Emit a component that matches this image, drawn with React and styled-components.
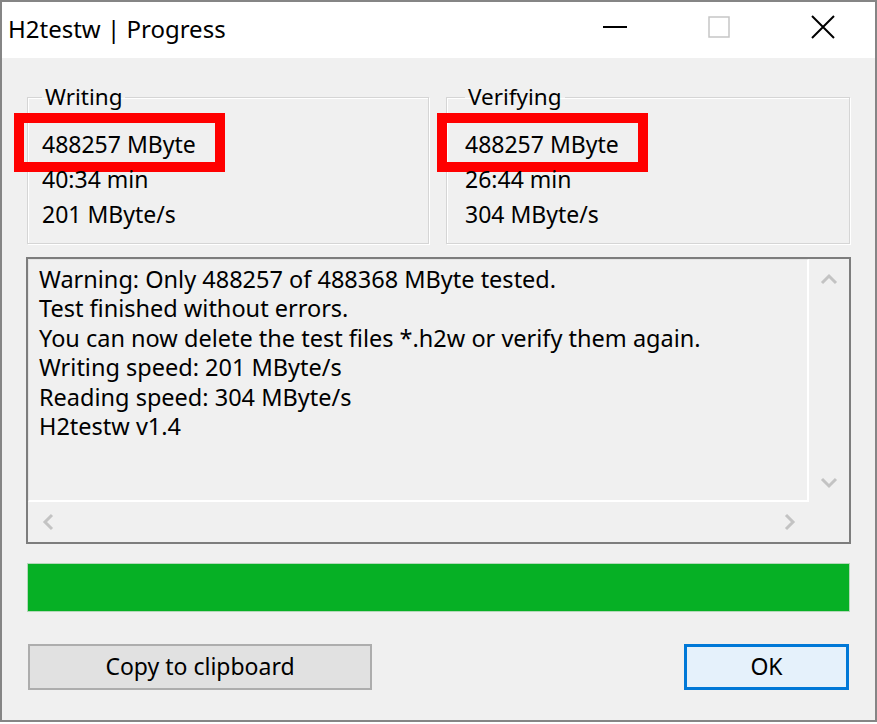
import styled, { createGlobalStyle } from "styled-components";

const GlobalStyle = createGlobalStyle`
    html, body {
        margin: 0;
        padding: 0;
        background: #ffffff;
    }
    body {
        font-family: "Noto Sans", "Open Sans", sans-serif;
        color: #000000;
    }
`;

const groups = [
    { title: "Writing", size: "488257 MByte", time: "40:34 min", speed: "201 MByte/s", inset: 14 },
    { title: "Verifying", size: "488257 MByte", time: "26:44 min", speed: "304 MByte/s", inset: 18 },
];

const log = [
    "Warning: Only 488257 of 488368 MByte tested.",
    "Test finished without errors.",
    "You can now delete the test files *.h2w or verify them again.",
    "Writing speed: 201 MByte/s",
    "Reading speed: 304 MByte/s",
    "H2testw v1.4",
];

function Chevron({ dir }) {
    const paths = {
        up: "M2 10 L9 3 L16 10",
        down: "M2 3 L9 10 L16 3",
        left: "M10 2 L3 9 L10 16",
        right: "M3 2 L10 9 L3 16",
    };
    const vertical = dir === "up" || dir === "down";
    return (
        <svg width={vertical ? 18 : 13} height={vertical ? 13 : 18} viewBox={vertical ? "0 0 18 13" : "0 0 13 18"}>
            <path d={paths[dir]} fill="none" stroke="#c3c3c3" strokeWidth="3" />
        </svg>
    );
}

export default function App() {
    return (
        <>
            <GlobalStyle />
            <Window>
                <TitleBar>
                    <Title>H2testw | Progress</Title>
                    <CaptionButton>
                        <svg width="24" height="4" viewBox="0 0 24 4">
                            <rect x="0" y="1" width="24" height="2" fill="#000" />
                        </svg>
                    </CaptionButton>
                    <CaptionButton>
                        <svg width="22" height="22" viewBox="0 0 22 22">
                            <rect x="1" y="1" width="20" height="20" fill="none" stroke="#c6c6c6" strokeWidth="1.5" />
                        </svg>
                    </CaptionButton>
                    <CaptionButton>
                        <svg width="24" height="24" viewBox="0 0 24 24">
                            <path d="M1 1 L23 23 M23 1 L1 23" stroke="#000" strokeWidth="2" />
                        </svg>
                    </CaptionButton>
                </TitleBar>
                <Client>
                    <GroupRow>
                        {groups.map((g) => (
                            <Group key={g.title} inset={g.inset}>
                                <Legend>{g.title}</Legend>
                                <Value highlight>{g.size}</Value>
                                <Value>{g.time}</Value>
                                <Value>{g.speed}</Value>
                            </Group>
                        ))}
                    </GroupRow>
                    <Memo>
                        <MemoText>
                            {log.map((line) => (
                                <div key={line}>{line}</div>
                            ))}
                        </MemoText>
                        <VScroll>
                            <ScrollArrow><Chevron dir="up" /></ScrollArrow>
                            <ScrollArrow><Chevron dir="down" /></ScrollArrow>
                        </VScroll>
                        <HScroll>
                            <ScrollArrow><Chevron dir="left" /></ScrollArrow>
                            <ScrollArrow><Chevron dir="right" /></ScrollArrow>
                        </HScroll>
                        <Corner />
                    </Memo>
                    <Progress />
                    <ButtonRow>
                        <Button width={344}>Copy to clipboard</Button>
                        <Button width={165} primary>OK</Button>
                    </ButtonRow>
                </Client>
            </Window>
        </>
    );
}

const Window = styled.div`
    width: 877px;
    height: 722px;
    box-sizing: border-box;
    border: 2px solid #858585;
    display: flex;
    flex-direction: column;
    background: #f0f0f0;
`;
const TitleBar = styled.div`
    height: 56px;
    flex-shrink: 0;
    background: #ffffff;
    display: flex;
    align-items: center;
    padding-left: 6px;
`;
const Title = styled.div`
    flex: 1;
    font-size: 24px;
    padding-bottom: 3px;
`;
const CaptionButton = styled.div`
    width: 104px;
    height: 100%;
    display: flex;
    align-items: center;
    justify-content: center;
    padding-bottom: 6px;
    box-sizing: border-box;
`;
const Client = styled.div`
    flex: 1;
    display: flex;
    flex-direction: column;
    padding: 26px 25px 30px 25px;
`;
const GroupRow = styled.div`
    display: grid;
    grid-template-columns: 402px 404px;
    column-gap: 17px;
`;
const Group = styled.fieldset`
    margin: 0;
    height: 160px;
    box-sizing: border-box;
    border: 1px solid #d5d5d5;
    box-shadow: inset 1px 1px 0 #ffffff, 1px 1px 0 #ffffff;
    padding: 17px 14px 0 ${({ inset }) => inset}px;
    min-width: 0;
`;
const Legend = styled.legend`
    margin-left: 0;
    padding: 0 3px;
    font-size: 22.5px;
    line-height: 26px;
`;
const Value = styled.div`
    position: relative;
    font-size: 23px;
    line-height: 35px;
    white-space: nowrap;
    ${({ highlight }) => highlight && `
        &::before {
            content: "";
            position: absolute;
            left: -28px;
            top: -14px;
            width: 211px;
            height: 59px;
            box-sizing: border-box;
            border: 10px solid #ff0000;
        }
    `}
`;
const Memo = styled.div`
    margin: 13px -1px 0 -1px;
    height: 287px;
    box-sizing: border-box;
    border: 2px solid #7d7d7d;
    display: grid;
    grid-template-columns: 1fr 40px;
    grid-template-rows: 1fr 40px;
`;
const MemoText = styled.div`
    padding: 5px 10px;
    font-size: 23.5px;
    line-height: 29.4px;
    white-space: nowrap;
    overflow: hidden;
    border-right: 2px solid #ffffff;
    border-bottom: 2px solid #ffffff;
    border-top: 1px solid #e4e4e4;
    border-left: 1px solid #e4e4e4;
`;
const VScroll = styled.div`
    display: flex;
    flex-direction: column;
    justify-content: space-between;
`;
const HScroll = styled.div`
    display: flex;
    justify-content: space-between;
`;
const ScrollArrow = styled.div`
    width: 40px;
    height: 40px;
    display: flex;
    align-items: center;
    justify-content: center;
`;
const Corner = styled.div`
    background: #f0f0f0;
`;
const Progress = styled.div`
    margin-top: 19px;
    height: 49px;
    box-sizing: border-box;
    background: #06b025;
    border: 1px solid #b4d8b9;
`;
const ButtonRow = styled.div`
    margin-top: 32px;
    display: flex;
    justify-content: space-between;
    padding: 0 1px;
`;
const Button = styled.button`
    width: ${({ width }) => width}px;
    height: 46px;
    box-sizing: border-box;
    font-family: "Noto Sans", "Open Sans", sans-serif;
    font-size: 23px;
    color: #000000;
    background: ${({ primary }) => (primary ? "#e5f1fb" : "#e1e1e1")};
    border: ${({ primary }) => (primary ? "3px solid #0078d7" : "2px solid #adadad")};
    border-radius: 0;
    padding: 0 0 2px 0;
`;
